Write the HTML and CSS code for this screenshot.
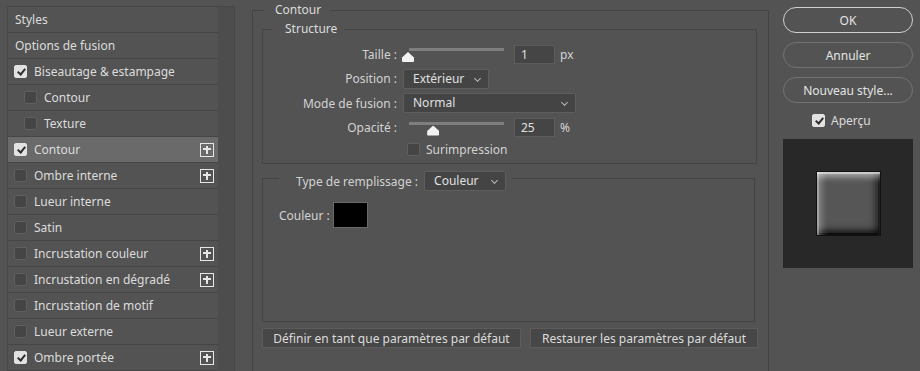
FILE: index.html
```html
<!DOCTYPE html>
<html>
<head>
  <title>Style de calque</title>
  <meta charset="utf-8">
  <link rel="stylesheet" href="styles.css">
</head>
<body>
  <div class="dialog">
    <aside class="styles-panel">
      <ul class="style-list">
        <li class="style-row"><span class="row-text">Styles</span></li>
        <li class="style-row"><span class="row-text">Options de fusion</span></li>
        <li class="style-row"><span class="check on"></span><span class="row-text">Biseautage &amp; estampage</span></li>
        <li class="style-row sub"><span class="check"></span><span class="row-text">Contour</span></li>
        <li class="style-row sub"><span class="check"></span><span class="row-text">Texture</span></li>
        <li class="style-row selected"><span class="check on"></span><span class="row-text">Contour</span><span class="plus"></span></li>
        <li class="style-row"><span class="check"></span><span class="row-text">Ombre interne</span><span class="plus"></span></li>
        <li class="style-row"><span class="check"></span><span class="row-text">Lueur interne</span></li>
        <li class="style-row"><span class="check"></span><span class="row-text">Satin</span></li>
        <li class="style-row"><span class="check"></span><span class="row-text">Incrustation couleur</span><span class="plus"></span></li>
        <li class="style-row"><span class="check"></span><span class="row-text">Incrustation en dégradé</span><span class="plus"></span></li>
        <li class="style-row"><span class="check"></span><span class="row-text">Incrustation de motif</span></li>
        <li class="style-row"><span class="check"></span><span class="row-text">Lueur externe</span></li>
        <li class="style-row"><span class="check on"></span><span class="row-text">Ombre portée</span><span class="plus"></span></li>
      </ul>
      <div class="scroll-track"></div>
    </aside>

    <main class="settings">
      <fieldset class="group outer">
        <legend class="outer-title">Contour</legend>

        <fieldset class="group structure">
          <legend class="structure-title">Structure</legend>
          <div class="form-grid">
            <label class="field-label">Taille :</label>
            <div class="field">
              <div class="slider"><div class="track"></div><div class="thumb" style="left: 0%"></div></div>
              <div class="num-input">1</div>
              <span class="unit">px</span>
            </div>

            <label class="field-label">Position :</label>
            <div class="field">
              <div class="select select-pos">Extérieur<span class="chevron"></span></div>
            </div>

            <label class="field-label">Mode de fusion :</label>
            <div class="field">
              <div class="select select-mode">Normal<span class="chevron"></span></div>
            </div>

            <label class="field-label">Opacité :</label>
            <div class="field">
              <div class="slider"><div class="track"></div><div class="thumb" style="left: 24%"></div></div>
              <div class="num-input">25</div>
              <span class="unit">%</span>
            </div>

            <span></span>
            <div class="field">
              <span class="check"></span><span class="check-text">Surimpression</span>
            </div>
          </div>
        </fieldset>

        <fieldset class="group fill">
          <legend class="fill-title">
            <span>Type de remplissage :</span>
            <div class="select select-fill">Couleur<span class="chevron"></span></div>
          </legend>
          <div class="color-row">
            <span>Couleur :</span>
            <span class="swatch"></span>
          </div>
        </fieldset>

        <div class="defaults">
          <button class="flat-btn btn-define">Définir en tant que paramètres par défaut</button>
          <button class="flat-btn btn-restore">Restaurer les paramètres par défaut</button>
        </div>
      </fieldset>
    </main>

    <aside class="actions">
      <button class="pill-btn primary">OK</button>
      <button class="pill-btn">Annuler</button>
      <button class="pill-btn">Nouveau style...</button>
      <div class="preview-toggle">
        <span class="check on"></span><span class="check-text">Aperçu</span>
      </div>
      <div class="preview">
        <div class="preview-square"></div>
      </div>
    </aside>
  </div>
</body>
</html>
```

FILE: styles.css
```css
* {
  margin: 0;
  padding: 0;
  box-sizing: border-box;
}

body {
  font-family: "Noto Sans", "Open Sans", sans-serif;
  font-size: 12px;
  color: #dcdcdc;
  background: #535353;
  width: 920px;
  height: 371px;
  overflow: hidden;
}

.dialog {
  display: flex;
  align-items: flex-start;
  height: 371px;
  overflow: hidden;
}

/* left list of styles */
.styles-panel {
  display: flex;
  margin-left: 7px;
  margin-top: 6px;
  border-top: 1px solid #454545;
  border-right: 1px solid #454545;
  height: 365px;
}

.style-list {
  list-style: none;
  width: 211px;
  border-left: 1px solid #4a4a4a;
}

.style-row {
  display: flex;
  align-items: center;
  height: 26px;
  padding-left: 6px;
  padding-right: 4px;
  border-bottom: 1px solid #464646;
}

.style-row.sub {
  padding-left: 16px;
}

.style-row.selected {
  background: #6a6a6a;
}

.row-text {
  flex: 1;
  padding-left: 1px;
  white-space: nowrap;
}

.check {
  width: 13px;
  height: 13px;
  border-radius: 2px;
  background: #454545;
  border: 1px solid #5f5f5f;
  margin-right: 6px;
  flex: none;
  position: relative;
}

.check.on {
  background: #e2e2e2;
  border-color: #e2e2e2;
}

.check.on::after {
  content: "";
  position: absolute;
  left: 3.5px;
  top: 1px;
  width: 3px;
  height: 6px;
  border-right: 2px solid #2e2e2e;
  border-bottom: 2px solid #2e2e2e;
  transform: rotate(40deg);
}

.plus {
  width: 14px;
  height: 14px;
  border: 1.5px solid #e6e6e6;
  position: relative;
  flex: none;
}

.plus::before,
.plus::after {
  content: "";
  position: absolute;
  background: #e6e6e6;
}

.plus::before {
  left: 2px;
  right: 2px;
  top: 4.5px;
  height: 2px;
}

.plus::after {
  top: 2px;
  bottom: 2px;
  left: 4.5px;
  width: 2px;
}

.scroll-track {
  width: 16px;
  background: #4d4d4d;
}

/* middle settings */
.settings {
  margin-left: 17px;
}

.group {
  border: 1px solid #444444;
}

.outer {
  width: 516px;
  height: 369px;
  margin-top: 2px;
  padding: 3px 10px 0 9px;
  border-bottom: none;
}

.outer-title {
  margin-left: 2px;
  padding: 0 9px 0 11px;
  line-height: 16px;
}

.structure {
  width: 495px;
  padding: 7px 0 7px 0;
}

.structure-title {
  margin-left: 9px;
  padding: 0 7px 0 13px;
  line-height: 16px;
}

.form-grid {
  display: grid;
  grid-template-columns: 135px auto;
  grid-template-rows: 20px 20px 20px 20px 14px;
  column-gap: 5px;
  row-gap: 4.5px;
  color: #d2d2d2;
}

.field-label {
  text-align: right;
  align-self: center;
  white-space: nowrap;
  padding-right: 1px;
}

.field {
  display: flex;
  align-items: center;
}

.slider {
  position: relative;
  width: 105px;
  height: 20px;
}

.track {
  position: absolute;
  left: 6px;
  right: 4px;
  top: 4px;
  height: 3px;
  background: #7e7e7e;
}

.thumb {
  position: absolute;
  top: 8px;
  width: 12px;
  height: 10px;
  margin-left: -1px;
  background: #f2f2f2;
  clip-path: polygon(50% 0, 100% 55%, 100% 100%, 0 100%, 0 55%);
  border-radius: 1px;
}

.num-input {
  width: 41px;
  height: 19px;
  margin-left: 6px;
  padding-left: 6px;
  line-height: 17px;
  background: #454545;
  border: 1px solid #5c5c5c;
  color: #e0e0e0;
}

.unit {
  margin-left: 5px;
}

.select {
  position: relative;
  height: 20px;
  line-height: 18px;
  padding-left: 9px;
  background: #444444;
  border: 1px solid #5e5e5e;
  border-radius: 2px;
  color: #e0e0e0;
}

.select-pos {
  width: 86px;
}

.select-mode {
  width: 173px;
}

.select-fill {
  width: 82px;
}

.chevron {
  position: absolute;
  right: 8px;
  top: 6px;
  width: 5px;
  height: 5px;
  border-right: 1px solid #b8b8b8;
  border-bottom: 1px solid #b8b8b8;
  transform: rotate(45deg);
}

.check-text {
  white-space: nowrap;
}

.field .check {
  margin-left: 4px;
}

.fill {
  width: 493px;
  margin-top: 1px;
  padding: 11px 0 93px 16px;
}

.fill-title {
  display: flex;
  align-items: center;
  padding: 6px 5px 0 17px;
  gap: 6px;
  color: #d2d2d2;
}

.color-row {
  display: flex;
  align-items: center;
  gap: 3px;
  color: #d2d2d2;
}

.swatch {
  width: 35px;
  height: 26px;
  background: #000;
  border: 1px solid #6a6a6a;
}

.defaults {
  display: flex;
  gap: 9px;
  margin-top: 6px;
}

.flat-btn {
  font: inherit;
  color: #dcdcdc;
  height: 20px;
  background: #474747;
  border: 1px solid #5c5c5c;
  border-radius: 1px;
}

.btn-define {
  width: 259px;
}

.btn-restore {
  width: 228px;
}

/* right column */
.actions {
  width: 130px;
  margin-left: 14px;
  margin-top: 7px;
  display: flex;
  flex-direction: column;
  gap: 9px;
}

.pill-btn {
  font: inherit;
  color: #e4e4e4;
  height: 26px;
  background: transparent;
  border: 1px solid #737373;
  border-radius: 13px;
}

.pill-btn.primary {
  border: 1.5px solid #d0d0d0;
}

.preview-toggle {
  display: flex;
  align-items: center;
  padding-left: 29px;
  height: 18px;
  margin-top: -1px;
}

.preview-toggle .check {
  margin-right: 6px;
}

.preview {
  height: 129px;
  margin-top: 1px;
  background: #282828;
  display: flex;
  align-items: center;
  justify-content: center;
}

.preview-square {
  width: 65px;
  height: 65px;
  margin-left: 1px;
  background: #565656;
  border: 1px solid #111111;
  box-shadow:
    inset 0 2px 0 rgba(255, 255, 255, 0.45),
    inset 2px 0 0 rgba(255, 255, 255, 0.25),
    inset 0 8px 6px -3px rgba(255, 255, 255, 0.5),
    inset 8px 0 6px -3px rgba(255, 255, 255, 0.3),
    inset 0 -2px 0 rgba(0, 0, 0, 0.7),
    inset -2px 0 0 rgba(0, 0, 0, 0.5),
    inset 0 -8px 6px -3px rgba(0, 0, 0, 0.75),
    inset -8px 0 6px -3px rgba(0, 0, 0, 0.55);
}
```
